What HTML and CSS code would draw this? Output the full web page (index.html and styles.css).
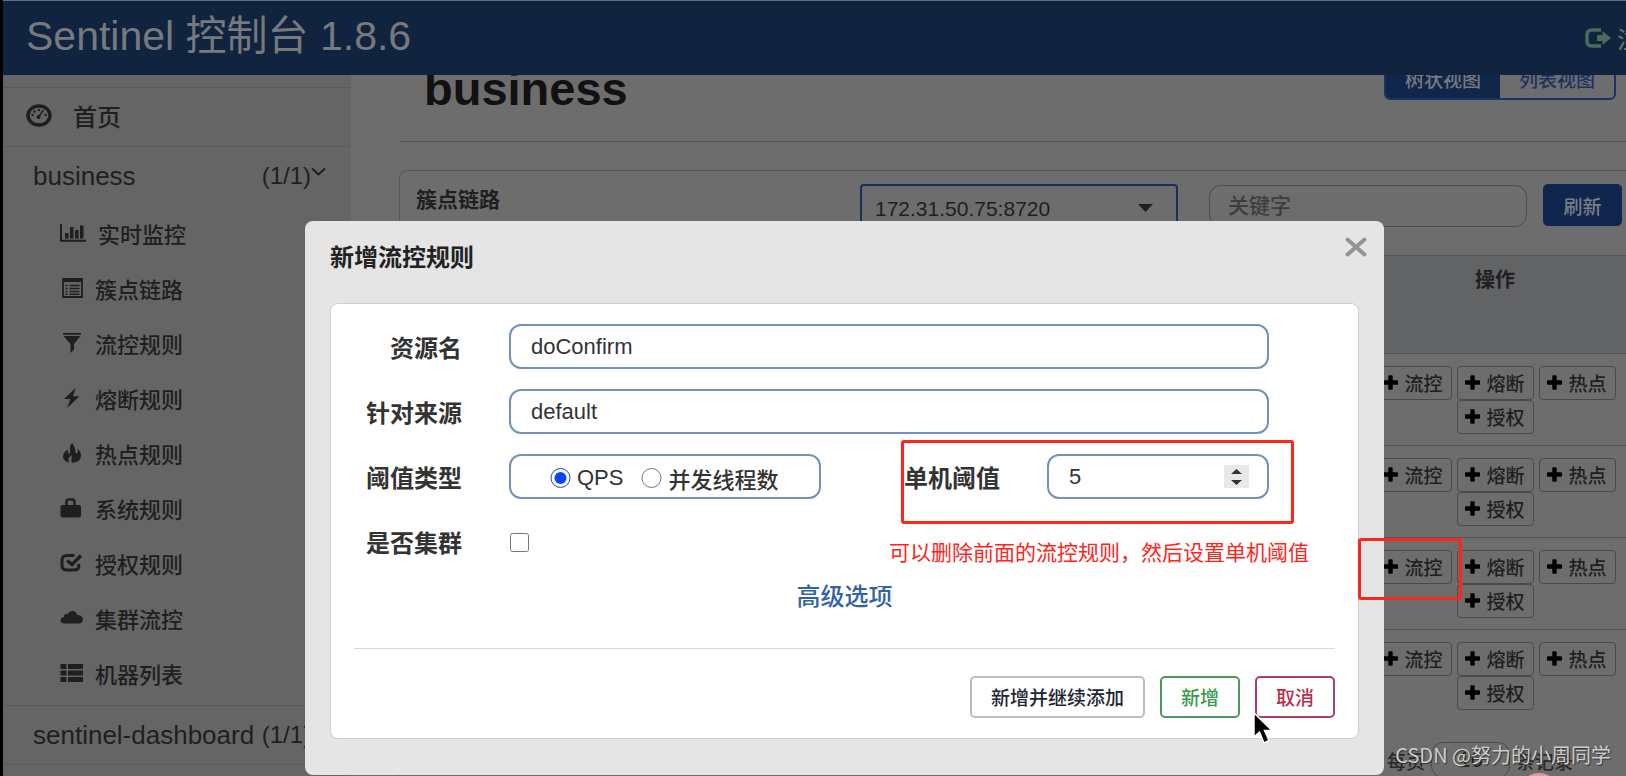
FILE: index.html
```html
<!DOCTYPE html>
<html lang="zh-CN">
<head>
<meta charset="utf-8">
<title>Sentinel 控制台</title>
<link rel="stylesheet" href="styles.css">
</head>
<body>
<svg class="sprite" aria-hidden="true">
  <symbol id="plus" viewBox="0 0 15 15"><path d="M5.300 1.200Q5.300 .2 6.300 .2H8.700Q9.700 .2 9.700 1.200V5.300H14Q15 5.300 15 6.300V8.700Q15 9.700 14 9.700H9.700V13.800Q9.700 14.800 8.700 14.800H6.300Q5.300 14.800 5.300 13.800V9.700H1Q0 9.700 0 8.700V6.300Q0 5.300 1 5.300H5.300Z"/></symbol>
</svg>
<div class="app">
  <header class="topbar">
    <div class="brand">Sentinel 控制台 1.8.6</div>
    <a class="logout" href="#">
      <svg width="26" height="20" viewBox="0 0 26 20"><path d="M16 2H7Q2 2 2 7V13Q2 18 7 18H16" fill="none" stroke="currentColor" stroke-width="3.400"/><path d="M12 7H17.500V3L26 10L17.500 17V13H12Z" fill="currentColor"/></svg>
      <span>注销</span>
    </a>
  </header>
  <div class="body">
    <nav class="sidebar">
      <a class="home" href="#">
        <svg width="26" height="23" viewBox="0 0 26 23"><ellipse cx="13" cy="11.500" rx="11" ry="9.500" fill="none" stroke="currentColor" stroke-width="3.400"/><g fill="currentColor"><circle cx="6.500" cy="11" r="1.200"/><circle cx="8.500" cy="7.500" r="1.200"/><circle cx="13" cy="6" r="1.200"/><circle cx="19.500" cy="11" r="1.200"/><circle cx="12.500" cy="13" r="2"/></g><path d="M12.500 13L17.500 6" stroke="currentColor" stroke-width="1.600"/></svg>
        <span>首页</span>
      </a>
      <div class="group">
        <a class="group-head" href="#"><span>business</span><span class="count">(1/1)</span>
          <svg width="15" height="9" viewBox="0 0 15 9"><path d="M1 1.500L7.500 7.500L14 1.500" fill="none" stroke="currentColor" stroke-width="2"/></svg></a>
        <a class="item" href="#"><svg width="26" height="18" viewBox="0 0 26 18"><path d="M1 0V16.800H26" fill="none" stroke="currentColor" stroke-width="2"/><path d="M5 9H8.500V14.500H5ZM10 3H13.500V14.500H10ZM15 6H18.500V14.500H15ZM20 1.500H23.500V14.500H20Z" fill="currentColor"/></svg><span>实时监控</span></a>
        <a class="item" href="#"><svg width="23" height="20" viewBox="0 0 23 20"><path d="M3 1H22V19H3Z" fill="none" stroke="currentColor" stroke-width="1.800"/><path d="M3 1H22V4H3Z" fill="currentColor"/><path d="M5.500 7.500H7.500M9.500 7.500H19.500M5.500 10.500H7.500M9.500 10.500H19.500M5.500 13.500H7.500M9.500 13.500H19.500M5.500 16.300H7.500M9.500 16.300H19.500" stroke="currentColor" stroke-width="1.500"/></svg><span>簇点链路</span></a>
        <a class="item" href="#"><svg width="23" height="20" viewBox="0 0 23 20"><path d="M3 0H21V1.800H3ZM3.500 3H20.500L14 11V16.500L10.500 20V11Z" fill="currentColor"/></svg><span>流控规则</span></a>
        <a class="item" href="#"><svg width="23" height="20" viewBox="0 0 23 20"><path d="M15.500 0L4 11H10.500L7 20L19.500 8.300H13Z" fill="currentColor"/></svg><span>熔断规则</span></a>
        <a class="item" href="#"><svg width="23" height="20" viewBox="0 0 23 20"><path d="M12.500 0C8 3 11 7 10 10C9.500 12 7.500 10 8 6.500C4.500 8 3 11 3 13.500C3 16.500 6 19 9.500 19.500C7 16.500 9.500 14.500 11 12C13 14.500 10.500 17 12 19.800C17.500 19.500 21 17 21 12.500C21 9.500 19.500 7.500 17.500 5.500C18 8.500 18 10 16.500 10.500C14.500 9 15.500 6 14.500 4C14 2.500 12.500 1.500 12.500 0Z" fill="currentColor"/></svg><span>热点规则</span></a>
        <a class="item" href="#"><svg width="23" height="20" viewBox="0 0 23 20"><path d="M6.500 8V4Q6.500 1.500 9 1.500H12Q14.500 1.500 14.500 4V8" fill="none" stroke="currentColor" stroke-width="2.600"/><path d="M2 7H19Q21 7 21 9V17.500Q21 19.500 19 19.500H2.500Q.5 19.500 .5 17.500V9Q.5 7 2 7Z" fill="currentColor"/></svg><span>系统规则</span></a>
        <a class="item" href="#"><svg width="23" height="20" viewBox="0 0 23 20"><path d="M14.500 2.500H7Q2 2.500 2 7V12.500Q2 17 7 17H14Q18.800 17 18.800 13V11" fill="none" stroke="currentColor" stroke-width="3"/><path d="M7 7.500L12 11.500L21 2.500" fill="none" stroke="currentColor" stroke-width="3.400"/></svg><span>授权规则</span></a>
        <a class="item" href="#"><svg width="23" height="20" viewBox="0 0 23 20"><path d="M4.500 15.500C-1 15.500-.5 9.500 4 9C3.500 6 6.500 5 8 6C10 1.500 16.500 2.500 17 7C24.500 6.500 24.500 15.500 18.500 15.500Z" fill="currentColor"/></svg><span>集群流控</span></a>
        <a class="item" href="#"><svg width="23" height="20" viewBox="0 0 23 20"><path d="M.5 1H6.500V6H.5ZM8 1H23V6H8ZM.5 7.500H6.500V12.500H.5ZM8 7.500H23V12.500H8ZM.5 14H6.500V19H.5ZM8 14H23V19H8Z" fill="currentColor"/></svg><span>机器列表</span></a>
      </div>
      <div class="group last">
        <a class="group-head" href="#"><span>sentinel-dashboard</span><span class="count">(1/1)</span>
          <svg width="15" height="9" viewBox="0 0 15 9"><path d="M1 1.500L7.500 7.500L14 1.500" fill="none" stroke="currentColor" stroke-width="2"/></svg></a>
      </div>
    </nav>
    <main class="main">
      <div class="page-head">
        <h1>business</h1>
        <div class="switch"><button class="on">树状视图</button><button>列表视图</button></div>
      </div>
      <section class="panel">
        <div class="panel-head">
          <h2>簇点链路</h2>
          <div class="select-wrap">
            <select aria-label="机器"><option>172.31.50.75:8720</option></select>
            <svg width="15" height="8" viewBox="0 0 15 8"><path d="M0 0H15L7.500 8Z" fill="currentColor"/></svg>
          </div>
          <input class="search" type="text" placeholder="关键字" aria-label="关键字">
          <button class="refresh">刷新</button>
        </div>
        <table class="grid">
          <thead><tr><th></th><th class="ops">操作</th></tr></thead>
          <tbody>
            <tr><td></td><td class="ops"><div class="acts"><button><svg><use href="#plus"/></svg>流控</button><button><svg><use href="#plus"/></svg>熔断</button><button><svg><use href="#plus"/></svg>热点</button><button><svg><use href="#plus"/></svg>授权</button></div></td></tr>
            <tr><td></td><td class="ops"><div class="acts"><button><svg><use href="#plus"/></svg>流控</button><button><svg><use href="#plus"/></svg>熔断</button><button><svg><use href="#plus"/></svg>热点</button><button><svg><use href="#plus"/></svg>授权</button></div></td></tr>
            <tr><td></td><td class="ops"><div class="acts"><button><svg><use href="#plus"/></svg>流控</button><button><svg><use href="#plus"/></svg>熔断</button><button><svg><use href="#plus"/></svg>热点</button><button><svg><use href="#plus"/></svg>授权</button></div></td></tr>
            <tr><td></td><td class="ops"><div class="acts"><button><svg><use href="#plus"/></svg>流控</button><button><svg><use href="#plus"/></svg>熔断</button><button><svg><use href="#plus"/></svg>热点</button><button><svg><use href="#plus"/></svg>授权</button></div></td></tr>
          </tbody>
        </table>
        <label class="pager"><span>每页</span><input type="text" value="16"><span>条记录</span></label>
      </section>
    </main>
  </div>
</div>

<div class="modal" role="dialog" aria-labelledby="dlg-title">
  <div class="modal-head">
    <h2 id="dlg-title">新增流控规则</h2>
    <button class="close" aria-label="关闭"><svg width="22" height="20" viewBox="0 0 22 20"><path d="M2.500 2.500L19.500 17.500M19.500 2.500L2.500 17.500" stroke="currentColor" stroke-width="4" stroke-linecap="round"/></svg></button>
  </div>
  <form class="card">
    <div class="row"><label class="name" for="res">资源名</label><input class="field" id="res" type="text" value="doConfirm"></div>
    <div class="row"><label class="name" for="src">针对来源</label><input class="field" id="src" type="text" value="default"></div>
    <div class="row">
      <span class="name">阈值类型</span>
      <div class="field radios">
        <label><input type="radio" name="grade" checked>QPS</label>
        <label><input type="radio" name="grade">并发线程数</label>
      </div>
      <label class="name second" for="cnt">单机阈值</label>
      <div class="field number">
        <input id="cnt" type="number" value="5">
        <svg width="25" height="23" viewBox="0 0 25 23"><path d="M0 0H25V23H0Z" fill="#e8e8e8"/><path d="M7 9L12.500 4L18 9ZM7 15L12.500 20L18 15Z" fill="#333"/></svg>
      </div>
    </div>
    <div class="row"><label class="name" for="cluster">是否集群</label><input class="check" id="cluster" type="checkbox"></div>
    <a class="advanced" href="#">高级选项</a>
    <div class="buttons">
      <button type="button">新增并继续添加</button>
      <button type="button" class="ok">新增</button>
      <button type="button" class="cancel">取消</button>
    </div>
  </form>
</div>

<div class="mark mark-field"></div>
<div class="mark mark-button"></div>
<div class="note">可以删除前面的流控规则，然后设置单机阈值</div>
<svg class="cursor" width="26" height="34" viewBox="0 0 26 34"><path d="M2 1V25L7.500 20L12 31L17 28.500L12.500 18.500H20Z" fill="#000" stroke="#fff" stroke-width="1.500"/></svg>
<div class="blob"></div>
<div class="watermark">CSDN @努力的小周同学</div>
</body>
</html>
```
FILE: styles.css
```css
* { box-sizing: border-box; }
body {
  margin: 0;
  height: 100vh;
  overflow: hidden;
  position: relative;
  background: #000;
  font-family: "Liberation Sans", "Noto Sans CJK SC", sans-serif;
  font-weight: 500;
  color: #1f1f1f;
}
button, input, select { font-family: inherit; font-weight: inherit; color: inherit; margin: 0; }
a { color: inherit; text-decoration: none; }
h1, h2 { margin: 0; }
.sprite { display: none; }

.app {
  height: 100vh;
  margin-left: 3px;
  display: flex;
  flex-direction: column;
  overflow: hidden;
}
.topbar {
  flex: none;
  height: 75px;
  display: flex;
  justify-content: space-between;
  background: #10233f;
  border-top: 1px solid #666d78;
  color: #77797d;
  overflow: hidden;
}
.brand { padding-left: 23px; font-size: 41px; font-weight: 400; line-height: 70px; white-space: nowrap; }
.logout {
  flex: none;
  width: 41px;
  display: flex;
  gap: 6px;
  align-items: center;
  font-size: 23px;
  white-space: nowrap;
  color: #54746a;
}
.logout svg { flex: none; color: #4c6c5a; }

.body { flex: 1; min-height: 0; display: flex; }

.sidebar { flex: none; width: 348px; background: #656565; padding-top: 12px; }
.home {
  display: flex;
  align-items: center;
  gap: 21px;
  height: 59px;
  padding: 0 0 3px 23px;
  border-top: 1px solid #595856;
  font-size: 24px;
}
.group { border-top: 1px solid #5c5c5c; padding-bottom: 5px; }
.group.last { border-bottom: 1px solid #5c5c5c; padding: 0; }
.group-head {
  display: flex;
  align-items: center;
  height: 58px;
  padding: 0 25px 0 30px;
  font-size: 26px;
  white-space: nowrap;
}
.group-head .count { margin-left: auto; font-size: 24px; }
.group-head svg { margin-bottom: 10px; }
.item {
  display: flex;
  align-items: center;
  gap: 12px;
  height: 55px;
  padding-left: 57px;
  font-size: 22px;
}

.main {
  flex: 1;
  min-width: 0;
  overflow: hidden;
  background: #6d6d6d;
  padding-left: 48px;
}
.page-head {
  display: flex;
  justify-content: space-between;
  align-items: flex-start;
  height: 85px;
  margin-top: -18px;
  padding: 0 10px 0 25px;
  border-bottom: 1px solid #555;
}
h1 { font-size: 47px; line-height: 64px; color: #111; }
.switch { display: flex; border: 2px solid #1c3361; border-radius: 6px; overflow: hidden; }
.switch button {
  height: 39px;
  padding: 0 19px;
  border: 0;
  background: none;
  font-size: 19px;
  color: #1c3361;
}
.switch .on { background: #10264b; color: #77797d; }

.panel {
  margin-top: 28px;
  border: 1px solid #555;
  border-width: 1px 0 0 1px;
  border-top-left-radius: 8px;
}
.panel-head {
  display: flex;
  align-items: flex-start;
  height: 84px;
  padding: 13px 4px 0 16px;
}
.panel-head h2 { flex: 1; font-size: 21px; line-height: 31px; }
.select-wrap { position: relative; width: 318px; }
.select-wrap select {
  width: 100%;
  height: 48px;
  padding: 0 13px;
  appearance: none;
  background: none;
  border: 2px solid #1c2f5a;
  border-radius: 4px;
  font-size: 21px;
}
.select-wrap svg { position: absolute; right: 25px; top: 20px; }
.search {
  width: 318px;
  height: 42px;
  margin: 1px 16px 0 31px;
  padding: 0 18px;
  border: 1px solid #4c4c4c;
  border-radius: 12px;
  background: none;
  font-size: 21px;
}
.search::placeholder { color: #3d3d3d; opacity: 1; }
.refresh {
  width: 79px;
  height: 42px;
  padding: 0;
  border: 0;
  border-radius: 5px;
  background: #10264f;
  color: #7b7d83;
  font-size: 19px;
}

.grid { width: 100%; border-collapse: collapse; }
.grid th, .grid td { padding: 0; border-top: 1px solid #555; }
.grid thead tr { height: 98px; background: #626365; }
.grid th { vertical-align: top; padding-top: 8px; font-size: 20px; line-height: 32px; }
.grid .ops { width: 262px; }
.acts { display: flex; flex-wrap: wrap; justify-content: center; column-gap: 5px; padding: 12px 9px 11px; }
.acts button {
  display: flex;
  align-items: center;
  justify-content: center;
  gap: 6px;
  width: 77px;
  height: 34px;
  padding: 0 0 2px;
  border: 1px solid #4a4a4a;
  border-radius: 4px;
  background: none;
  font-size: 19px;
  white-space: nowrap;
}
.acts svg { width: 15px; height: 15px; flex: none; }
.pager {
  display: flex;
  justify-content: flex-end;
  align-items: center;
  gap: 6px;
  padding: 21px 53px 0 0;
  font-size: 19px;
  color: #2a2a2a;
}
.pager input {
  width: 79px;
  height: 36px;
  border: 1px solid #4c4c4c;
  border-radius: 12px;
  background: none;
  text-align: center;
  font-size: 22px;
  color: #1f1f1f;
}

.modal {
  position: absolute;
  top: 221px;
  left: 305px;
  right: 242px;
  padding: 0 25px 36px;
  background: #e5e5e5;
  border-radius: 8px;
  color: #333;
}
.modal-head { display: flex; justify-content: space-between; height: 82px; }
.modal-head h2 { font-size: 24px; line-height: 74px; color: #222; }
.close { align-self: flex-start; margin: 16px -8px 0 0; padding: 0; border: 0; background: none; color: #949494; }
.close svg { display: block; }
.card {
  display: flex;
  flex-direction: column;
  background: #fff;
  border: 1px solid #d0d0d0;
  border-radius: 8px;
  padding: 20px 23px;
}
.row { display: flex; height: 45px; margin: 0 66px 20px 0; }
.name { width: 108px; text-align: right; font-size: 24px; font-weight: bold; line-height: 50px; white-space: nowrap; }
.field {
  flex: 1;
  min-width: 0;
  height: 45px;
  margin-left: 47px;
  padding: 0 20px;
  border: 2px solid #7391b9;
  border-radius: 12px;
  background: #fff;
  font-size: 22px;
  color: #333;
}
.radios { flex: 0 1 312px; display: flex; align-items: center; gap: 18px; padding: 2px 0 0 39px; white-space: nowrap; }
.radios label { display: flex; align-items: center; gap: 6px; }
.radios input { width: 21px; height: 20px; accent-color: #0a43f5; }
.second { width: auto; margin-left: auto; }
.number { flex: 0 1 222px; display: flex; align-items: center; padding: 0 18px 0 20px; }
.number input { flex: 1; min-width: 0; border: 0; padding: 0; background: none; font-size: 22px; appearance: textfield; }
.number input::-webkit-inner-spin-button { appearance: none; }
.check { width: 19px; height: 19px; margin: 14px 0 0 48px; }
.advanced { align-self: center; margin-top: -4px; font-size: 24px; line-height: 34px; color: #3163a8; }
.buttons {
  display: flex;
  justify-content: flex-end;
  gap: 15px;
  margin-top: 34px;
  padding-top: 27px;
  border-top: 1px solid #d8d8d8;
}
.buttons button {
  height: 42px;
  padding: 0 19px 2px;
  border: 2px solid #bdbdbd;
  border-radius: 5px;
  background: #fff;
  font-size: 19px;
  color: #1d2636;
}
.buttons .ok { border-color: #4c9a5c; color: #3a9a4c; }
.buttons .cancel { border-color: #b0405a; color: #b5304c; }

.mark { position: absolute; border: 3px solid #fe251b; border-radius: 3px; }
.mark-field { left: 901px; top: 440px; width: 393px; height: 84px; }
.mark-button { left: 1358px; top: 538px; width: 104px; height: 62px; }
.note {
  position: absolute;
  left: 889px;
  top: 535px;
  font-size: 21px;
  line-height: 32px;
  white-space: nowrap;
  font-family: "Noto Sans CJK SC", sans-serif;
  font-weight: 400;
  color: #fe251b;
}
.cursor { position: absolute; left: 1252px; top: 712px; }
.blob { position: absolute; left: 1526px; top: 773px; width: 26px; height: 16px; border-radius: 50%; background: #dd9aa2; }
.watermark {
  position: absolute;
  right: 15px;
  bottom: 6px;
  font-family: "Noto Sans CJK SC", sans-serif;
  font-weight: 400;
  font-size: 20px;
  line-height: 30px;
  color: #cdcdcd;
  text-shadow: 1px 1px 1px #333;
}
```
